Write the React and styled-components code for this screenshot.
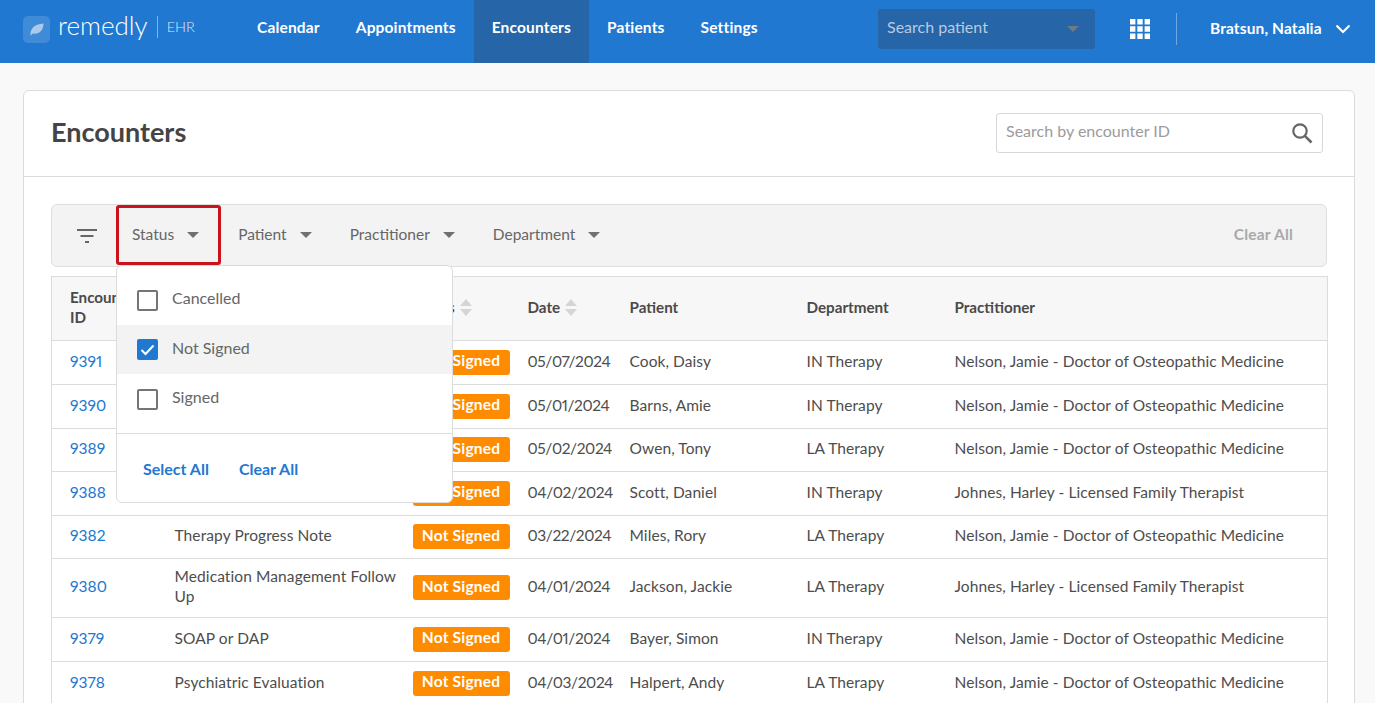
import React from "react";
import styled, { createGlobalStyle } from "styled-components";

const Global = createGlobalStyle`
  html, body { margin: 0; padding: 0; background: #f9f9f9; }
  body { font-family: "Lato", "Open Sans", sans-serif; font-size: 15px; color: #4a4a4a; font-variant-numeric: proportional-nums; }
  * { box-sizing: border-box; }
`;

const Shell = styled.div`
  height: 703px; overflow: hidden;
`;
const Header = styled.header`
  height: 63px; background: #2178d1; display: flex; align-items: stretch; color: #fff;
`;
const Brand = styled.div`
  width: 239px; padding-left: 23px; display: flex; align-items: center; flex: none;
`;
const LogoTile = styled.span`
  width: 27px; height: 27px; border-radius: 5px; background: rgba(255,255,255,.14); margin-top: -5px;
  display: flex; align-items: center; justify-content: center; flex: none;
`;
const BrandName = styled.span`
  font-size: 26px; font-weight: 300; margin-left: 8px; line-height: 1; margin-bottom: 13px;
`;
const BrandProduct = styled.span`
  font-size: 14.5px; font-weight: 300; margin-left: 9px; padding-left: 9px; border-left: 1px solid rgba(255,255,255,.45);
  line-height: 22px; color: rgba(255,255,255,.85); margin-bottom: 9px;
`;
const Nav = styled.nav`
  display: flex; align-items: stretch; width: 639px; flex: none;
`;
const NavItem = styled.a`
  padding: 0 18px 9px; display: flex; align-items: center; font-weight: 700; font-size: 15.5px; color: #fff; letter-spacing: .16px;
  background: ${p => (p.$active ? "#2565a8" : "transparent")};
`;
const PatientSearch = styled.div`
  width: 217px; height: 40px; margin-top: 9px; border-radius: 3px; background: #2565a8; padding: 0 16px 5px 9px;
  display: flex; align-items: center; justify-content: space-between; flex: none; color: #b9cbe0; font-size: 16px;
`;
const Caret = styled.span`
  width: 0; height: 0; flex: none; border-left: 6.5px solid transparent; border-right: 6.5px solid transparent;
  border-top: 6.5px solid ${p => p.$color || "#707070"}; margin-top: ${p => p.$top || 0}px;
`;
const GridIcon = styled.svg`
  width: 20px; height: 20px; margin-left: 35px; flex: none; align-self: center; margin-top: -5px;
`;
const UserBlock = styled.div`
  margin-left: 26px; height: 32px; align-self: center; padding-left: 33px; border-left: 1px solid rgba(255,255,255,.35); margin-top: -5px;
  display: flex; align-items: center; font-weight: 700; font-size: 15.5px; gap: 13px; letter-spacing: .12px;
`;
const UserName = styled.span`
  margin-top: -2px;
`;
const Page = styled.main`
  padding: 27px 20px 0 23px;
`;
const Card = styled.section`
  background: #fff; border: 1px solid #dcdcdc; border-radius: 6px; height: 700px;
`;
const CardHead = styled.div`
  height: 86px; padding: 0 31px 0 27px; border-bottom: 1px solid #dcdcdc; display: flex; align-items: center; justify-content: space-between;
`;
const Title = styled.h1`
  margin: 0 0 4px; font-size: 27px; font-weight: 700; color: #444;
`;
const IdSearch = styled.div`
  width: 327px; height: 40px; border: 1px solid #d8d8d8; border-radius: 3px; padding: 0 9px;
  display: flex; align-items: center; justify-content: space-between; color: #9b9b9b; font-size: 16px; margin-top: -2px;
`;
const IdPlaceholder = styled.span`
  margin-top: -5px;
`;
const CardBody = styled.div`
  padding: 27px 27px 0;
`;
const FilterBar = styled.div`
  height: 63px; background: #f3f3f3; border: 1px solid #dedede; border-radius: 6px; display: flex; align-items: center; padding-left: 24px; padding-right: 33px;
`;
const FilterIcon = styled.svg`
  width: 22px; height: 18px; flex: none; margin-right: 18px;
`;
const FilterWrap = styled.div`
  position: relative; height: 60px; align-self: flex-start; flex: none; margin-right: ${p => p.$gap}px;
`;
const FilterButton = styled.div`
  height: 60px; display: flex; align-items: center; gap: 13px; padding: 0 ${p => (p.$marked ? 19 : 0)}px 2px ${p => (p.$marked ? 13 : 0)}px;
  border: ${p => (p.$marked ? "3px solid #c9141e" : "none")}; border-radius: 3px; color: #666; font-size: 15.5px;
`;
const ClearAll = styled.span`
  margin-left: auto; color: #a9a9a9; font-weight: 700; font-size: 15.5px; letter-spacing: .2px; padding-bottom: 3px;
`;
const Dropdown = styled.div`
  position: absolute; left: 0; top: 60px; width: 337px; height: 238px; background: #fff; z-index: 5;
  border: 1px solid #dcdcdc; border-radius: 6px; display: flex; flex-direction: column; padding-top: 9px;
`;
const Option = styled.div`
  height: 49.5px; padding: 0 20px 4px; display: flex; align-items: center; gap: 14px; font-size: 16px; color: #666;
  background: ${p => (p.$checked ? "#f3f3f3" : "transparent")};
`;
const Box = styled.span`
  width: 21px; height: 21px; border-radius: 2px; flex: none; display: flex; align-items: center; justify-content: center;
  border: ${p => (p.$checked ? "none" : "2px solid #757575")};
  background: ${p => (p.$checked ? "#2178d1" : "#fff")};
  margin-top: 5px;
`;
const DropActions = styled.div`
  margin-top: 9px; border-top: 1px solid #dcdcdc; padding: 1px 26px 0; flex: 1; display: flex; align-items: center; gap: 30px;
  color: #2178d1; font-weight: 700; font-size: 16px;
`;
const TableWrap = styled.div`
  margin-top: 9px;
`;
const Table = styled.table`
  width: 1276px; table-layout: fixed; border-collapse: collapse; font-size: 15.5px; color: #4d4d4d; letter-spacing: .08px;
  border: 1px solid #dcdcdc;
`;
const Th = styled.th`
  height: 64px; background: #f7f7f7; text-align: left; font-weight: 700; padding: 0 18px 4px ${p => p.$left || 18}px; line-height: 20px; color: #4a4a4a;
  border-bottom: 1px solid #dcdcdc; font-size: 15.2px; letter-spacing: 0;
`;
const Td = styled.td`
  padding: 0 18px 4px; line-height: 20px; border-bottom: 1px solid #dcdcdc; height: ${p => p.$h}px;
`;
const TypeCell = styled(Td)`
  padding-right: 0; letter-spacing: .1px;
`;
const BadgeCell = styled(Td)`
  padding: 0 0 1px 12px;
`;
const DateCell = styled(Td)`
  letter-spacing: -.4px;
`;
const IdLink = styled.a`
  color: #2178d1;
`;
const Badge = styled.span`
  display: inline-flex; align-items: center; height: 25px; width: 97px; justify-content: center; border-radius: 3px; background: #ff8c00; color: #fff; font-weight: 700; vertical-align: middle; padding-bottom: 4px; letter-spacing: .2px;
`;
const SortArrows = styled.svg`
  width: 12px; height: 17px; margin-left: 5px; vertical-align: -3px;
`;

const Sort = () => (
  <SortArrows viewBox="0 0 12 17">
    <path d="M6 0l6 7H0z M0 10h12l-6 7z" fill="#d5d5d5" />
  </SortArrows>
);

const rows = [
  ["9391", "", "05/07/2024", "Cook, Daisy", "IN Therapy", "Nelson, Jamie - Doctor of Osteopathic Medicine", 44],
  ["9390", "", "05/01/2024", "Barns, Amie", "IN Therapy", "Nelson, Jamie - Doctor of Osteopathic Medicine", 44],
  ["9389", "", "05/02/2024", "Owen, Tony", "LA Therapy", "Nelson, Jamie - Doctor of Osteopathic Medicine", 43],
  ["9388", "", "04/02/2024", "Scott, Daniel", "IN Therapy", "Johnes, Harley - Licensed Family Therapist", 44],
  ["9382", "Therapy Progress Note", "03/22/2024", "Miles, Rory", "LA Therapy", "Nelson, Jamie - Doctor of Osteopathic Medicine", 43],
  ["9380", "Medication Management Follow Up", "04/01/2024", "Jackson, Jackie", "LA Therapy", "Johnes, Harley - Licensed Family Therapist", 59],
  ["9379", "SOAP or DAP", "04/01/2024", "Bayer, Simon", "IN Therapy", "Nelson, Jamie - Doctor of Osteopathic Medicine", 44],
  ["9378", "Psychiatric Evaluation", "04/03/2024", "Halpert, Andy", "LA Therapy", "Nelson, Jamie - Doctor of Osteopathic Medicine", 44],
];

const colWidths = [105, 244, 109, 102, 177, 148, 391];

export default function App() {
  return (
    <Shell>
      <Global />
      <Header>
        <Brand>
          <LogoTile>
            <svg width="16" height="16" viewBox="0 0 16 16">
              <path d="M1.5 14.5C1 8 5 3 14.5 2.5C14.5 9 10.5 13.5 4 12.5C3.3 13 2.5 13.8 1.5 14.5Z" fill="rgba(255,255,255,.55)" />
            </svg>
          </LogoTile>
          <BrandName>remedly</BrandName>
          <BrandProduct>EHR</BrandProduct>
        </Brand>
        <Nav>
          <NavItem>Calendar</NavItem>
          <NavItem>Appointments</NavItem>
          <NavItem $active>Encounters</NavItem>
          <NavItem>Patients</NavItem>
          <NavItem>Settings</NavItem>
        </Nav>
        <PatientSearch>
          <span>Search patient</span>
          <Caret $color="#6e7b86" $top={5} />
        </PatientSearch>
        <GridIcon viewBox="0 0 20 20">
          <path d="M0 0h5.4v5.4H0zM7.3 0h5.4v5.4H7.3zM14.6 0H20v5.4h-5.4zM0 7.3h5.4v5.4H0zM7.3 7.3h5.4v5.4H7.3zM14.6 7.3H20v5.4h-5.4zM0 14.6h5.4V20H0zM7.3 14.6h5.4V20H7.3zM14.6 14.6H20V20h-5.4z" fill="#fff" />
        </GridIcon>
        <UserBlock>
          <UserName>Bratsun, Natalia</UserName>
          <svg width="16" height="10" viewBox="0 0 16 10">
            <path d="M1.5 1.5L8 8l6.5-6.5" fill="none" stroke="#fff" strokeWidth="2.2" />
          </svg>
        </UserBlock>
      </Header>
      <Page>
        <Card>
          <CardHead>
            <Title>Encounters</Title>
            <IdSearch>
              <IdPlaceholder>Search by encounter ID</IdPlaceholder>
              <svg width="22" height="22" viewBox="0 0 22 22">
                <circle cx="9" cy="9" r="6.7" fill="none" stroke="#666" strokeWidth="2.2" />
                <path d="M13.8 13.8L20.5 20.5" stroke="#666" strokeWidth="2.6" />
              </svg>
            </IdSearch>
          </CardHead>
          <CardBody>
            <FilterBar>
              <FilterIcon viewBox="0 0 22 18">
                <path d="M1 3h20M4.5 9h13M9 15h4" stroke="#666" strokeWidth="2" fill="none" />
              </FilterIcon>
              <FilterWrap $gap={17}>
                <FilterButton $marked>
                  <span>Status</span>
                  <Caret $top={2} />
                </FilterButton>
                <Dropdown>
                  <Option>
                    <Box />
                    <span>Cancelled</span>
                  </Option>
                  <Option $checked>
                    <Box $checked>
                      <svg width="15" height="12" viewBox="0 0 15 12">
                        <path d="M1.5 6l4 4 8-8.5" fill="none" stroke="#fff" strokeWidth="2" />
                      </svg>
                    </Box>
                    <span>Not Signed</span>
                  </Option>
                  <Option>
                    <Box />
                    <span>Signed</span>
                  </Option>
                  <DropActions>
                    <span>Select All</span>
                    <span>Clear All</span>
                  </DropActions>
                </Dropdown>
              </FilterWrap>
              <FilterWrap $gap={38}>
                <FilterButton>
                  <span>Patient</span>
                  <Caret $top={2} />
                </FilterButton>
              </FilterWrap>
              <FilterWrap $gap={38}>
                <FilterButton>
                  <span>Practitioner</span>
                  <Caret $top={2} />
                </FilterButton>
              </FilterWrap>
              <FilterWrap $gap={0}>
                <FilterButton>
                  <span>Department</span>
                  <Caret $top={2} />
                </FilterButton>
              </FilterWrap>
              <ClearAll>Clear All</ClearAll>
            </FilterBar>
            <TableWrap>
              <Table>
                <colgroup>
                  {colWidths.map((w, i) => (
                    <col key={i} style={{ width: w }} />
                  ))}
                </colgroup>
                <thead>
                  <tr>
                    <Th>Encounter ID</Th>
                    <Th />
                    <Th $left={12}>Status<Sort /></Th>
                    <Th>Date<Sort /></Th>
                    <Th>Patient</Th>
                    <Th>Department</Th>
                    <Th>Practitioner</Th>
                  </tr>
                </thead>
                <tbody>
                  {rows.map(r => (
                    <tr key={r[0]}>
                      <Td $h={r[6]}><IdLink>{r[0]}</IdLink></Td>
                      <TypeCell $h={r[6]}>{r[1]}</TypeCell>
                      <BadgeCell $h={r[6]}><Badge>Not Signed</Badge></BadgeCell>
                      <DateCell $h={r[6]}>{r[2]}</DateCell>
                      <Td $h={r[6]}>{r[3]}</Td>
                      <Td $h={r[6]}>{r[4]}</Td>
                      <Td $h={r[6]}>{r[5]}</Td>
                    </tr>
                  ))}
                </tbody>
              </Table>
            </TableWrap>
          </CardBody>
        </Card>
      </Page>
    </Shell>
  );
}
